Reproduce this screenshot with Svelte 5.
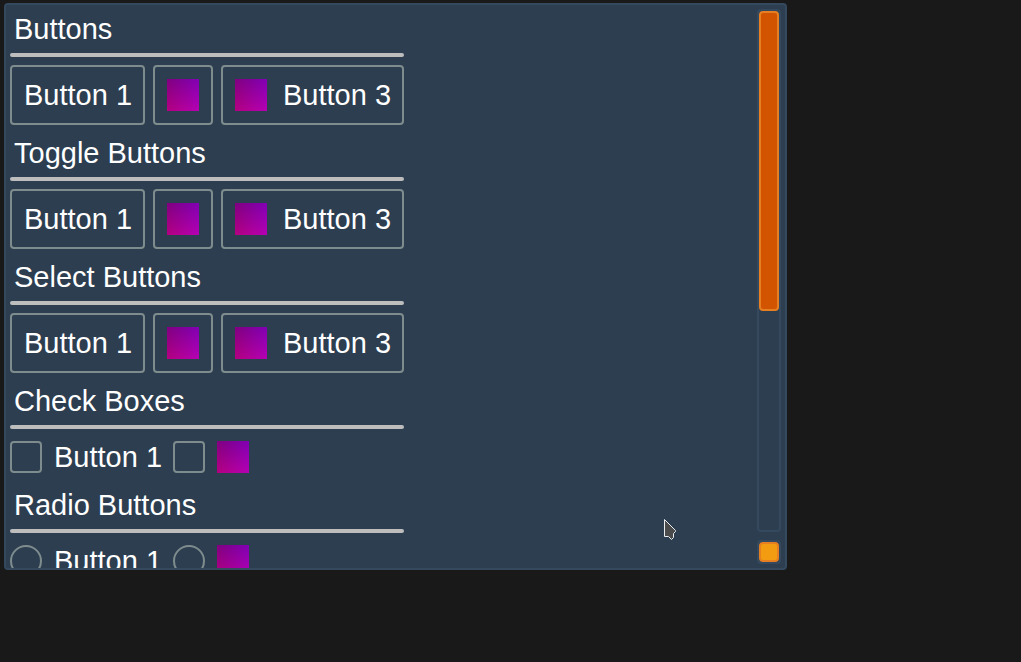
<script>
  let view;
  let position = $state(0);

  const groups = ['Buttons', 'Toggle Buttons', 'Select Buttons'];
  const choices = [
    { title: 'Check Boxes', type: 'checkbox' },
    { title: 'Radio Buttons', type: 'radio' }
  ];

  let pressed = $state([null, null, null]);

  function press(group, item) {
    if (group > 0) pressed[group] = pressed[group] === item ? null : item;
  }

  function scrollView() {
    view.scrollTop = (position / 100) * (view.scrollHeight - view.clientHeight);
  }
</script>

<main class="panel">
  <div class="view" bind:this={view}>
    <div class="stack">
      {#each groups as title, g}
        <h2>{title}</h2>
        <hr />
        <div class="row">
          <button class:on={pressed[g] === 0} onclick={() => press(g, 0)}>Button 1</button>
          <button class="square" class:on={pressed[g] === 1} aria-label="Button 2" onclick={() => press(g, 1)}>
            <span class="swatch"></span>
          </button>
          <button class:on={pressed[g] === 2} onclick={() => press(g, 2)}>
            <span class="swatch"></span>Button 3
          </button>
        </div>
      {/each}
      {#each choices as choice}
        <h2>{choice.title}</h2>
        <hr />
        <div class="row choices">
          <label><input type={choice.type} name={choice.type} />Button 1</label>
          <label><input type={choice.type} name={choice.type} aria-label="Button 2" /><span class="swatch"></span></label>
        </div>
      {/each}
    </div>
  </div>
  <div class="rail">
    <input class="scroll" type="range" min="0" max="100" aria-label="Scroll" bind:value={position} oninput={scrollView} />
    <button class="corner" aria-label="Resize"><span></span></button>
  </div>
</main>

<svg class="pointer" width="16" height="24" viewBox="0 0 16 24" aria-hidden="true">
  <path d="M1.5 1.5V18.5H5.5L8.5 21.5L10.5 19.5V15.5L12.5 13.5V12.5Z" fill="#4b4b4b" stroke="#e9edf0" />
</svg>

<style>
  :global(body) {
    background: #191919;
    overflow: hidden;
  }
  :global(#app) {
    display: flow-root;
  }
  .panel {
    box-sizing: border-box;
    display: flex;
    gap: 4px;
    height: calc(100vh - 95px);
    margin: 3px 234px 0 4px;
    padding: 0 4px;
    border: 2px solid #34495e;
    border-radius: 4px;
    background: #2c3e50;
    color: #fff;
    font: 29px/36px "Liberation Sans", Arial, sans-serif;
  }
  .view {
    flex: 1;
    min-width: 0;
    overflow: hidden;
  }
  .stack {
    display: flex;
    flex-direction: column;
    gap: 8px;
    width: max-content;
    padding: 4px 0;
  }
  h2 {
    box-sizing: border-box;
    height: 36px;
    margin: 0;
    padding: 2px 4px 0;
    font: inherit;
  }
  hr {
    width: 100%;
    height: 4px;
    margin: 0;
    border: 0;
    border-radius: 2px;
    background: #bdbdbd;
  }
  .row {
    display: flex;
    gap: 8px;
  }
  button {
    box-sizing: border-box;
    display: flex;
    align-items: center;
    gap: 16px;
    height: 60px;
    padding: 0 11px 0 12px;
    border: 2px solid #7f8c8d;
    border-radius: 4px;
    background: transparent;
    color: inherit;
    font: inherit;
  }
  .square {
    padding: 0 12px;
  }
  .on {
    background: #34495e;
  }
  .swatch {
    width: 32px;
    height: 32px;
    background:
      linear-gradient(to bottom, #800000, #b40000),
      linear-gradient(to right, #000080, #0000b4);
    background-blend-mode: screen;
  }
  .choices {
    gap: 11px;
    height: 40px;
  }
  label {
    display: flex;
    align-items: center;
    gap: 12px;
  }
  label input {
    appearance: none;
    box-sizing: border-box;
    width: 32px;
    height: 32px;
    margin: 0;
    border: 2px solid #7f8c8d;
    border-radius: 4px;
  }
  label input[type='radio'] {
    border-radius: 50%;
  }
  label input:checked {
    background: #e67e22;
  }
  .rail {
    display: flex;
    flex-direction: column;
    gap: 8px;
    width: 24px;
    padding: 4px 0;
  }
  .scroll {
    appearance: none;
    box-sizing: border-box;
    flex: 1;
    width: 24px;
    min-height: 0;
    margin: 0;
    border: 2px solid #34495e;
    border-radius: 4px;
    background: transparent;
    writing-mode: vertical-lr;
  }
  .scroll::-webkit-slider-thumb {
    appearance: none;
    box-sizing: border-box;
    width: 20px;
    height: 300px;
    border: 2px solid #e67e22;
    border-radius: 4px;
    background: #d35400;
  }
  .corner {
    width: 24px;
    height: 24px;
    padding: 0;
    border-color: #34495e;
  }
  .corner span {
    box-sizing: border-box;
    width: 20px;
    height: 20px;
    border: 2px solid #e67e22;
    border-radius: 4px;
    background: #f39c12;
  }
  .pointer {
    position: absolute;
    left: 663px;
    top: 518px;
    pointer-events: none;
  }
</style>
